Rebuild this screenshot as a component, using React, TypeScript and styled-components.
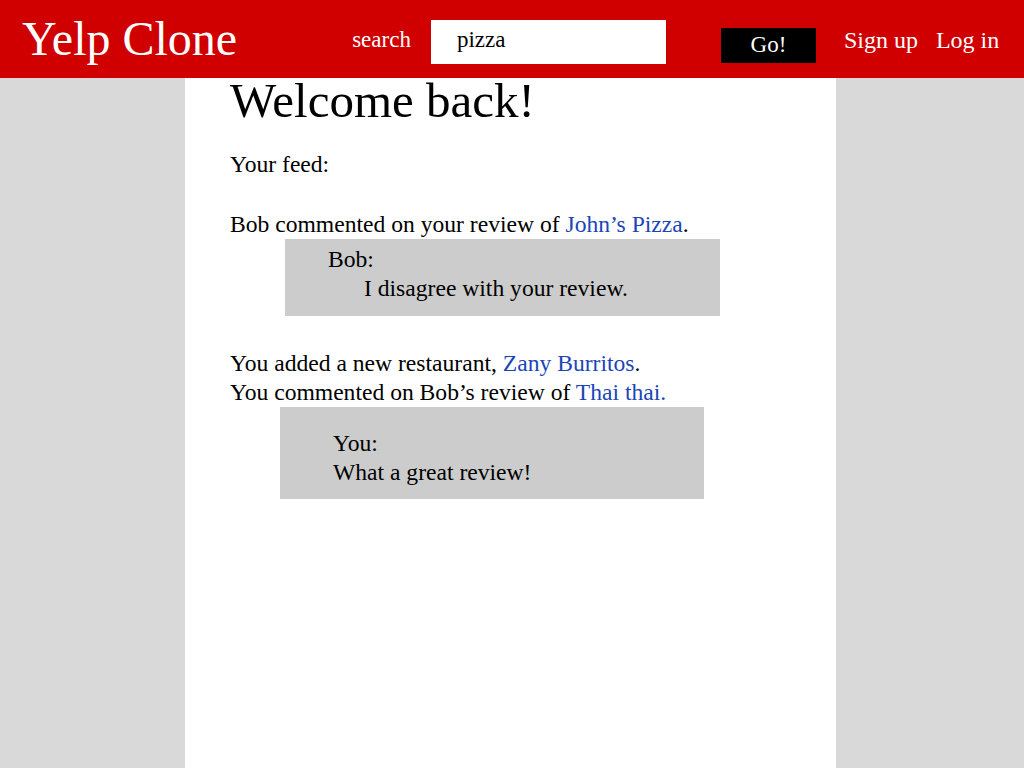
import React from 'react';
import styled, { createGlobalStyle } from 'styled-components';

const GlobalStyle = createGlobalStyle`
  html, body {
    margin: 0;
    padding: 0;
    background: #d9d9d9;
    font-family: "Liberation Serif", "Times New Roman", serif;
  }
`;

const Header = styled.header`
  height: 78px;
  background: #d00000;
  display: flex;
  align-items: center;
  padding: 0 22px;
  box-sizing: border-box;
  color: #fff;
`;

const Logo = styled.div`
  font-size: 48px;
  line-height: 1;
`;

const SearchForm = styled.form`
  display: flex;
  align-items: center;
  margin-left: 115px;
  margin-top: 5px;
`;

const SearchLabel = styled.label`
  font-size: 23px;
  margin-right: 20px;
  margin-top: -4px;
`;

const SearchInput = styled.input`
  width: 235px;
  height: 44px;
  box-sizing: border-box;
  border: none;
  outline: none;
  padding: 0 0 4px 26px;
  font-family: inherit;
  font-size: 23px;
  color: #000;
  background: #fff;
`;

const GoButton = styled.button`
  margin-left: 55px;
  margin-top: 7px;
  width: 95px;
  height: 35px;
  border: none;
  background: #000;
  color: #fff;
  font-family: inherit;
  font-size: 23px;
  padding: 0;
`;

const NavLink = styled.a<{ $gap: number }>`
  margin-left: ${(p) => p.$gap}px;
  margin-top: 3px;
  color: #fff;
  text-decoration: none;
  font-size: 24px;
`;

const Column = styled.main`
  width: 651px;
  margin-left: 185px;
  min-height: calc(100vh - 78px);
  background: #fff;
  padding: 0 45px;
  box-sizing: border-box;
  font-size: 23.6px;
  color: #000;
`;

const Title = styled.h1`
  margin: 0;
  padding-top: 1px;
  font-weight: normal;
  font-size: 49px;
  line-height: 44px;
`;

const Line = styled.p<{ $top?: number }>`
  margin: ${(p) => p.$top ?? 0}px 0 0;
  line-height: 29px;
`;

const Link = styled.a`
  color: #1a45b8;
  text-decoration: none;
`;

const Comment = styled.div<{ $offset: number; $width: number; $pad: string }>`
  margin-left: ${(p) => p.$offset}px;
  width: ${(p) => p.$width}px;
  box-sizing: border-box;
  background: #cccccc;
  padding: ${(p) => p.$pad};
  line-height: 29px;
`;

const CommentBody = styled.div<{ $indent: number }>`
  padding-left: ${(p) => p.$indent}px;
`;

export default function App() {
  return (
    <>
      <GlobalStyle />
      <Header>
        <Logo>Yelp Clone</Logo>
        <SearchForm onSubmit={(e) => e.preventDefault()}>
          <SearchLabel htmlFor="q">search</SearchLabel>
          <SearchInput id="q" defaultValue="pizza" />
          <GoButton type="submit">Go!</GoButton>
        </SearchForm>
        <NavLink $gap={28} href="#">Sign up</NavLink>
        <NavLink $gap={18} href="#">Log in</NavLink>
      </Header>
      <Column>
        <Title>Welcome back!</Title>
        <Line $top={27}>Your feed:</Line>
        <Line $top={31}>
          Bob commented on your review of <Link href="#">John’s Pizza</Link>.
        </Line>
        <Comment $offset={55} $width={435} $pad="6px 0 13px 43px">
          <div>Bob:</div>
          <CommentBody $indent={36}>I disagree with your review.</CommentBody>
        </Comment>
        <Line $top={33}>
          You added a new restaurant, <Link href="#">Zany Burritos</Link>.
        </Line>
        <Line>
          You commented on Bob’s review of <Link href="#">Thai thai.</Link>
        </Line>
        <Comment $offset={50} $width={424} $pad="22px 0 12px 53px">
          <div>You:</div>
          <CommentBody $indent={0}>What a great review!</CommentBody>
        </Comment>
      </Column>
    </>
  );
}
